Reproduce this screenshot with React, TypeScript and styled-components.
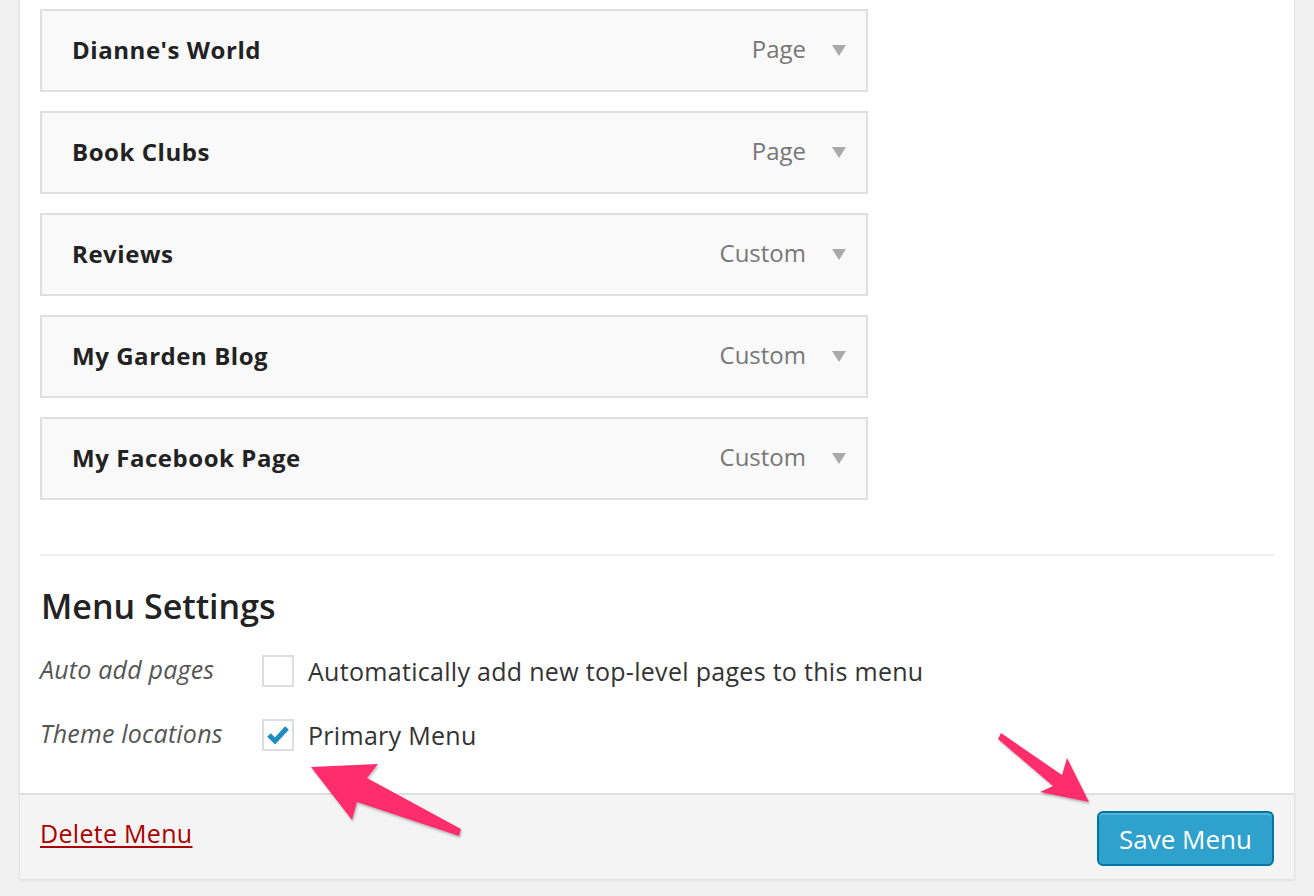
import React from 'react';
import styled, { createGlobalStyle } from 'styled-components';

const GlobalStyle = createGlobalStyle`
	body {
		margin: 0;
		background: #f1f1f1;
		font-family: 'Open Sans', 'Liberation Sans', sans-serif;
		color: #333;
	}
`;

type MenuItem = {
	title: string;
	kind: string;
};

const items: MenuItem[] = [
	{ title: "Dianne's World", kind: 'Page' },
	{ title: 'Book Clubs', kind: 'Page' },
	{ title: 'Reviews', kind: 'Custom' },
	{ title: 'My Garden Blog', kind: 'Custom' },
	{ title: 'My Facebook Page', kind: 'Custom' },
];

const Page = styled.div`
	position: relative;
	width: 1314px;
	height: 896px;
	padding-left: 19px;
	box-sizing: border-box;
	overflow: hidden;
`;

const Panel = styled.div`
	width: 1276px;
	background: #fff;
	border: 1px solid #e3e3e3;
	border-top: none;
	box-shadow: 0 1px 2px rgba(0, 0, 0, 0.06);
	box-sizing: border-box;
`;

const Body = styled.div`
	padding: 9px 20px 0 20px;
`;

const ItemList = styled.ul`
	list-style: none;
	margin: 0;
	padding: 0;
	display: flex;
	flex-direction: column;
	gap: 19px;
	width: 828px;
`;

const Item = styled.li`
	height: 83px;
	box-sizing: border-box;
	border: 2px solid #dfdfdf;
	background: #f9f9f9;
	display: flex;
	align-items: center;
	padding: 0 20px 0 30px;
`;

const ItemTitle = styled.span`
	flex: 1;
	font-size: 24px;
	font-weight: 700;
	letter-spacing: 0.55px;
	color: #222;
	padding-bottom: 2px;
`;

const ItemKind = styled.span`
	font-size: 24px;
	color: #777;
	padding-bottom: 4px;
`;

const Caret = styled.span`
	width: 0;
	height: 0;
	margin-left: 26px;
	border-left: 7px solid transparent;
	border-right: 7px solid transparent;
	border-top: 11px solid #aaa;
`;

const Divider = styled.hr`
	border: none;
	border-top: 2px solid #eee;
	margin: 54px 0 0 0;
`;

const Heading = styled.h3`
	margin: 27px 0 0 1px;
	font-size: 34px;
	font-weight: 600;
	color: #222;
	line-height: 46px;
`;

const SettingsGrid = styled.div`
	display: grid;
	grid-template-columns: 222px 1fr;
	grid-auto-rows: 64px;
	margin-top: 10px;
	padding-bottom: 26px;
`;

const SettingLabel = styled.span`
	display: flex;
	align-items: center;
	font-size: 25px;
	letter-spacing: 0.2px;
	font-style: italic;
	color: #555;
	padding-bottom: 4px;
`;

const SettingValue = styled.label`
	display: flex;
	align-items: center;
	gap: 14px;
	font-size: 25px;
	letter-spacing: 0.3px;
	color: #333;
`;

const CheckBox = styled.span`
	width: 32px;
	height: 32px;
	box-sizing: border-box;
	border: 2px solid #ddd;
	background: #fff;
	display: flex;
	align-items: center;
	justify-content: center;
	flex-shrink: 0;
`;

const Footer = styled.div`
	height: 86px;
	background: #f4f4f4;
	border-top: 2px solid #dfdfdf;
	box-sizing: border-box;
	display: flex;
	align-items: center;
	justify-content: space-between;
	padding: 0 20px 0 20px;
`;

const DeleteLink = styled.a`
	font-size: 25px;
	letter-spacing: 0.3px;
	color: #a00;
	text-decoration: underline;
	text-underline-offset: 3px;
	margin-top: -8px;
`;

const SaveButton = styled.button`
	height: 55px;
	padding: 0 20px;
	margin-top: 3px;
	font-family: inherit;
	font-size: 26px;
	color: #fff;
	background: #2ea2cc;
	border: 2px solid #0074a2;
	border-radius: 6px;
	box-shadow: inset 0 2px 0 rgba(120, 200, 230, 0.5);
`;

const Arrows = styled.svg`
	position: absolute;
	top: 0;
	left: 0;
	pointer-events: none;
	filter: drop-shadow(1px 2px 1px rgba(0, 0, 0, 0.25));
`;

const Check = () => (
	<svg width='22' height='20' viewBox='0 0 22 20'>
		<path d='M2 10 L8 16 L20 3' fill='none' stroke='#1e8cbe' strokeWidth='5' />
	</svg>
);

const App = () => {
	return (
		<>
			<GlobalStyle />
			<Page>
				<Panel>
					<Body>
						<ItemList>
							{items.map((item) => (
								<Item key={item.title}>
									<ItemTitle>{item.title}</ItemTitle>
									<ItemKind>{item.kind}</ItemKind>
									<Caret />
								</Item>
							))}
						</ItemList>
						<Divider />
						<Heading>Menu Settings</Heading>
						<SettingsGrid>
							<SettingLabel>Auto add pages</SettingLabel>
							<SettingValue>
								<CheckBox />
								Automatically add new top-level pages to this menu
							</SettingValue>
							<SettingLabel>Theme locations</SettingLabel>
							<SettingValue>
								<CheckBox>
									<Check />
								</CheckBox>
								Primary Menu
							</SettingValue>
						</SettingsGrid>
					</Body>
					<Footer>
						<DeleteLink>Delete Menu</DeleteLink>
						<SaveButton>Save Menu</SaveButton>
					</Footer>
				</Panel>
				<Arrows width='1314' height='896' viewBox='0 0 1314 896'>
					<polygon
						fill='#ff2d6c'
						points='311,767 378,764 367,778 461,829 459,836 357,802 352,820'
					/>
					<polygon
						fill='#ff2d6c'
						points='1089,802 1067,758 1062,775 1001,733 998,739 1053,786 1040,792'
					/>
				</Arrows>
			</Page>
		</>
	);
};

export default App;
